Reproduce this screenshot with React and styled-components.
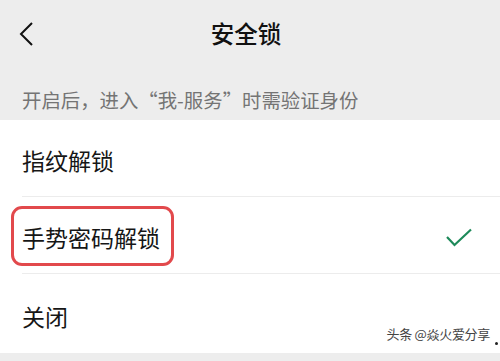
import React from "react";
import styled, { createGlobalStyle } from "styled-components";

const Global = createGlobalStyle`
  html, body { margin: 0; padding: 0; }
  body {
    width: 500px;
    height: 361px;
    overflow: hidden;
    background: #ededed;
    font-family: "Noto Sans CJK SC", "Noto Sans", sans-serif;
  }
`;

const Page = styled.div`
  width: 500px;
  height: 361px;
  display: flex;
  flex-direction: column;
  background: #ededed;
  position: relative;
`;

const NavBar = styled.div`
  height: 68px;
  display: grid;
  grid-template-columns: 60px 1fr 68px;
  align-items: center;
`;

const BackButton = styled.div`
  display: flex;
  align-items: center;
  padding-left: 18px;
  height: 100%;
`;

const Title = styled.div`
  text-align: center;
  font-size: 23.5px;
  font-weight: 500;
  color: #111;
  line-height: 1;
  margin-top: -1px;
`;

const Hint = styled.div`
  height: 52px;
  box-sizing: border-box;
  padding: 20px 0 0 22px;
  font-size: 19.4px;
  line-height: 24px;
  color: #747474;
`;

const List = styled.div`
  background: #fff;
  display: flex;
  flex-direction: column;
`;

const Row = styled.div`
  height: ${(p) => p.$h}px;
  display: flex;
  align-items: center;
  justify-content: space-between;
  margin-left: 22px;
  padding-right: 27px;
  box-sizing: border-box;
  border-bottom: ${(p) => (p.$last ? "none" : "1px solid #ececec")};
  padding-top: ${(p) => p.$pt}px;
`;

const Label = styled.span`
  font-size: 23px;
  line-height: 1;
  color: #161616;
  position: relative;
`;

const Highlight = styled.span`
  position: absolute;
  left: -11px;
  top: -20px;
  right: -14px;
  bottom: -17px;
  border: 3px solid #e2494c;
  border-radius: 11px;
`;

const Footer = styled.div`
  flex: 1;
  background: #ededed;
`;

const Watermark = styled.div`
  position: absolute;
  right: 10px;
  bottom: 18px;
  font-size: 13px;
  color: #444;
  letter-spacing: -0.3px;
  text-shadow: 0 0 2px #fff;
`;

const Dot = styled.span`
  position: absolute;
  right: 2px;
  bottom: 16px;
  width: 3px;
  height: 3px;
  border-radius: 50%;
  background: #222;
`;

const Chevron = () => (
  <svg width="16" height="26" viewBox="0 0 16 26">
    <path d="M14 2 L3 13 L14 24" fill="none" stroke="#111" strokeWidth="2" />
  </svg>
);

const Check = () => (
  <svg width="28" height="20" viewBox="0 0 28 20">
    <path d="M2 9 L9.5 17 L26 1.5" fill="none" stroke="#1e8a5a" strokeWidth="2.2" />
  </svg>
);

const options = [
  { label: "指纹解锁", h: 77, pt: 4 },
  { label: "手势密码解锁", h: 77, pt: 5, selected: true },
  { label: "关闭", h: 79, pt: 6, last: true },
];

export default function App() {
  return (
    <>
      <Global />
      <Page>
        <NavBar>
          <BackButton>
            <Chevron />
          </BackButton>
          <Title>安全锁</Title>
          <div />
        </NavBar>
        <Hint>开启后，进入“我-服务”时需验证身份</Hint>
        <List>
          {options.map((o) => (
            <Row key={o.label} $h={o.h} $pt={o.pt} $last={o.last}>
              <Label>
                {o.label}
                {o.selected && <Highlight />}
              </Label>
              {o.selected && <Check />}
            </Row>
          ))}
        </List>
        <Footer />
        <Watermark>头条 @焱火爱分享</Watermark>
        <Dot />
      </Page>
    </>
  );
}
